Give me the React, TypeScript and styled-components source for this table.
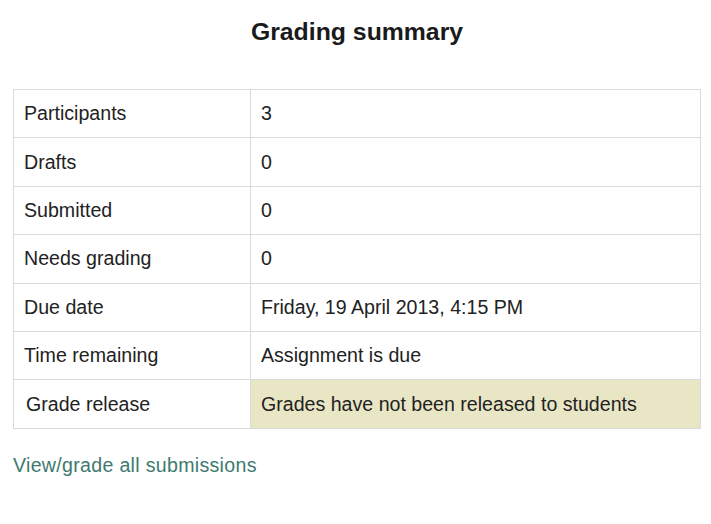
import React from "react";
import styled, { createGlobalStyle } from "styled-components";

const GlobalStyle = createGlobalStyle`
  body {
    margin: 0;
    background: #ffffff;
    font-family: "Liberation Sans", Arial, sans-serif;
    color: #222222;
  }
`;

const Page = styled.div`
  width: 711px;
  height: 524px;
  padding: 0 10px 0 13px;
  box-sizing: border-box;
`;

const Title = styled.h2`
  margin: 0;
  padding-top: 16px;
  height: 89px;
  box-sizing: border-box;
  text-align: center;
  font-size: 24.8px;
  line-height: 32px;
  font-weight: bold;
  color: #1a1a1a;
`;

const Table = styled.table`
  width: 688px;
  border-collapse: collapse;
  table-layout: fixed;
  font-size: 19.6px;
`;

const Cell = styled.td<{ $highlight?: boolean; $indent?: number }>`
  height: 47.4px;
  padding: 0 10px 0 ${(p) => p.$indent ?? 10}px;
  border: 1px solid #dadada;
  vertical-align: middle;
  background: ${(p) => (p.$highlight ? "#e9e6c5" : "#ffffff")};
  white-space: nowrap;
`;

const LabelCell = styled(Cell)`
  width: 216px;
`;

const Footer = styled.div`
  padding-top: 25px;
`;

const Link = styled.a`
  font-size: 19.6px;
  letter-spacing: 0.3px;
  color: #3e7a6d;
  text-decoration: none;
`;

const rows = [
  { label: "Participants", value: "3" },
  { label: "Drafts", value: "0" },
  { label: "Submitted", value: "0" },
  { label: "Needs grading", value: "0" },
  { label: "Due date", value: "Friday, 19 April 2013, 4:15 PM" },
  { label: "Time remaining", value: "Assignment is due" },
  {
    label: "Grade release",
    value: "Grades have not been released to students",
    highlight: true,
  },
];

export default function App() {
  return (
    <Page>
      <GlobalStyle />
      <Title>Grading summary</Title>
      <Table>
        <tbody>
          {rows.map((r) => (
            <tr key={r.label}>
              <LabelCell $indent={r.highlight ? 12 : 10}>{r.label}</LabelCell>
              <Cell $highlight={r.highlight}>{r.value}</Cell>
            </tr>
          ))}
        </tbody>
      </Table>
      <Footer>
        <Link href="#">View/grade all submissions</Link>
      </Footer>
    </Page>
  );
}
